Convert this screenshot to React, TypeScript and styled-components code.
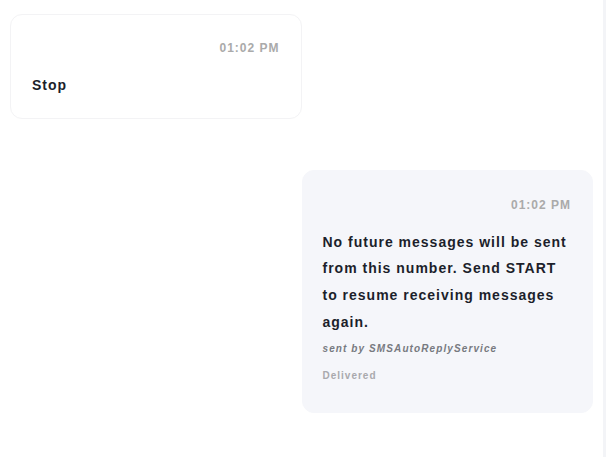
import React from "react";
import styled, { createGlobalStyle } from "styled-components";

const Global = createGlobalStyle`
  html, body { margin: 0; padding: 0; background: #ffffff; }
  body { font-family: "Liberation Sans", Arial, sans-serif; }
`;

const Layout = styled.div`
  display: flex;
  width: 606px;
  height: 457px;
  overflow: hidden;
`;

const Thread = styled.div`
  flex: 1;
  display: flex;
  flex-direction: column;
  gap: 51px;
  padding: 14px 10px 0 10px;
`;

const Rail = styled.div`
  width: 3px;
  background: #f3f4f7;
`;

const Row = styled.div<{ $out?: boolean }>`
  display: flex;
  justify-content: ${(p) => (p.$out ? "flex-end" : "flex-start")};
`;

const Bubble = styled.div<{ $out?: boolean }>`
  box-sizing: border-box;
  width: 50%;
  border-radius: 12px;
  border: 1px solid ${(p) => (p.$out ? "#f5f6fa" : "#f3f3f5")};
  background: ${(p) => (p.$out ? "#f5f6fa" : "#ffffff")};
  padding: ${(p) => (p.$out ? "27px 21px 29px 20px" : "26px 21px 19px 21px")};
  display: flex;
  flex-direction: column;
`;

const Time = styled.div`
  align-self: flex-end;
  font-size: 12px;
  font-weight: 700;
  letter-spacing: 1px;
  color: #aaaaaa;
  line-height: 14px;
`;

const Body = styled.div`
  margin-top: 17px;
  font-size: 14px;
  font-weight: 700;
  letter-spacing: 1px;
  line-height: 26.7px;
  color: #1c1f2b;
`;

const Signature = styled.div`
  margin-top: 6px;
  font-size: 10px;
  font-weight: 700;
  font-style: italic;
  letter-spacing: 1.1px;
  color: #777a80;
  line-height: 14px;
`;

const Status = styled.div`
  margin-top: 13px;
  font-size: 10px;
  font-weight: 700;
  letter-spacing: 1px;
  color: #a9a9ad;
  line-height: 14px;
`;

export default function App() {
  return (
    <>
      <Global />
      <Layout>
        <Thread>
          <Row>
            <Bubble>
              <Time>01:02 PM</Time>
              <Body>Stop</Body>
            </Bubble>
          </Row>
          <Row $out>
            <Bubble $out>
              <Time>01:02 PM</Time>
              <Body>
                No future messages will be sent from this number. Send START to
                resume receiving messages again.
              </Body>
              <Signature>sent by SMSAutoReplyService</Signature>
              <Status>Delivered</Status>
            </Bubble>
          </Row>
        </Thread>
        <Rail />
      </Layout>
    </>
  );
}
